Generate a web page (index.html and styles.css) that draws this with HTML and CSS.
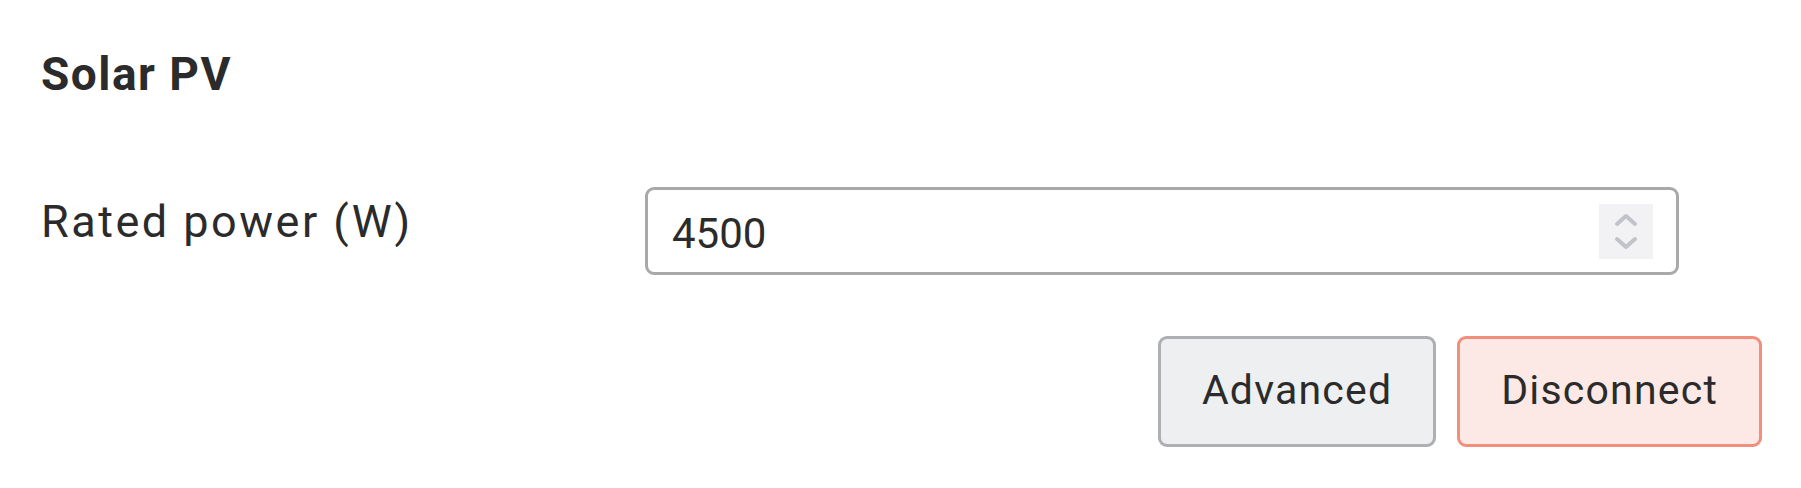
FILE: index.html
```html
<!DOCTYPE html>
<html lang="en">
<head>
<meta charset="utf-8">
<title>Solar PV</title>
<link rel="stylesheet" href="styles.css">
</head>
<body>
<main class="panel">
  <h2 class="title">Solar PV</h2>
  <div class="field-row">
    <label class="field-label">Rated power (W)</label>
    <div class="num-input">
      <span class="num-value">4500</span>
      <span class="spinner" aria-hidden="true">
        <svg width="54" height="55" viewBox="0 0 54 55">
          <polyline points="18,20 27,12 36,20" fill="none" stroke="#c2c2ca" stroke-width="4" stroke-linecap="round" stroke-linejoin="round"/>
          <polyline points="18,35 27,43 36,35" fill="none" stroke="#c2c2ca" stroke-width="4" stroke-linecap="round" stroke-linejoin="round"/>
        </svg>
      </span>
    </div>
  </div>
  <div class="actions">
    <button class="btn btn-secondary" type="button">Advanced</button>
    <button class="btn btn-danger" type="button">Disconnect</button>
  </div>
</main>
</body>
</html>
```

FILE: styles.css
```css
html, body {
  margin: 0;
  padding: 0;
  background: #ffffff;
}

body {
  font-family: Roboto, "Open Sans", "Liberation Sans", sans-serif;
  color: #2b2b2b;
}

.panel {
  width: 1801px;
  box-sizing: border-box;
  padding: 51px 39px 0 41px;
}

.title {
  margin: 0;
  font-size: 46px;
  line-height: 46px;
  font-weight: 700;
  letter-spacing: 1.5px;
}

.field-row {
  margin-top: 90px;
  display: grid;
  grid-template-columns: 604px 1034px;
  align-items: start;
}

.field-label {
  margin-top: 12px;
  font-size: 45px;
  line-height: 45px;
  font-weight: 400;
  letter-spacing: 2.5px;
}

.num-input {
  box-sizing: border-box;
  height: 88px;
  border: 3px solid #a9a9a9;
  border-radius: 9px;
  background: #ffffff;
  display: flex;
  align-items: center;
  padding: 0 23px 0 24px;
}

.num-value {
  font-size: 42px;
  line-height: 42px;
  padding-top: 6px;
}

.spinner {
  margin-left: auto;
  width: 54px;
  height: 55px;
  background: #f2f2f5;
  display: flex;
}

.actions {
  margin-top: 61px;
  display: flex;
  justify-content: flex-end;
  gap: 21px;
}

.btn {
  box-sizing: border-box;
  height: 111px;
  padding: 0 41px 3px 41px;
  border-radius: 9px;
  border: 3px solid;
  font-family: Roboto, "Open Sans", "Liberation Sans", sans-serif;
  font-size: 41px;
  line-height: 41px;
  letter-spacing: 1.2px;
  color: #2b2b2b;
  cursor: pointer;
}

.btn-secondary {
  background: #eeeff1;
  border-color: #aeafb2;
}

.btn-danger {
  background: #fce9e6;
  border-color: #ef8f7c;
}
```
